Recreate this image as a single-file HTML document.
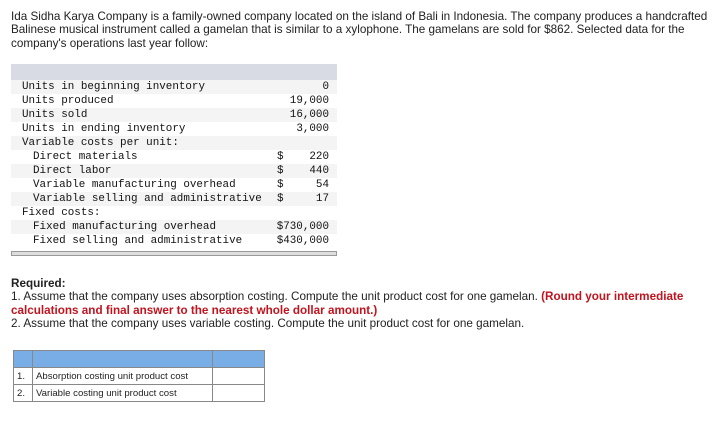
<!DOCTYPE html><html><head><style>
body{margin:0;background:#fff;font-family:"Liberation Sans",sans-serif;color:#222;}
.p{position:absolute;left:11px;font-size:11.7px;line-height:13.4px;white-space:nowrap;}
.t{position:absolute;left:11px;top:64px;width:326px;}
.h{height:16px;background:#d8dbe4;}
.r{position:relative;height:14px;font-family:"Liberation Mono",monospace;font-size:10.9px;line-height:14px;white-space:pre;color:#111;}
.r:nth-child(odd){background:#f4f4f4;}
.r span{position:absolute;}
.b{height:3px;border:1px solid #999;background:#ddd;margin-top:3px;}
table{position:absolute;left:13px;top:350px;border-collapse:collapse;font-size:9.6px;font-family:"Liberation Sans",sans-serif;}
td{border:1px solid #888;height:16px;padding:0 3px;}
</style></head><body>
<div class="p" style="top:10px">Ida Sidha Karya Company is a family-owned company located on the island of Bali in Indonesia. The company produces a handcrafted<br>Balinese musical instrument called a gamelan that is similar to a xylophone. The gamelans are sold for $862. Selected data for the<br>company's operations last year follow:</div>
<div class="t"><div class="h"></div>
<div>
<div class="r"><span style="left:11px">Units in beginning inventory</span><span style="right:8px">0</span></div>
<div class="r"><span style="left:11px">Units produced</span><span style="right:8px">19,000</span></div>
<div class="r"><span style="left:11px">Units sold</span><span style="right:8px">16,000</span></div>
<div class="r"><span style="left:11px">Units in ending inventory</span><span style="right:8px">3,000</span></div>
<div class="r"><span style="left:11px">Variable costs per unit:</span></div>
<div class="r"><span style="left:22px">Direct materials</span><span style="left:266px">$</span><span style="right:8px">220</span></div>
<div class="r"><span style="left:22px">Direct labor</span><span style="left:266px">$</span><span style="right:8px">440</span></div>
<div class="r"><span style="left:22px">Variable manufacturing overhead</span><span style="left:266px">$</span><span style="right:8px">54</span></div>
<div class="r"><span style="left:22px">Variable selling and administrative</span><span style="left:266px">$</span><span style="right:8px">17</span></div>
<div class="r"><span style="left:11px">Fixed costs:</span></div>
<div class="r"><span style="left:22px">Fixed manufacturing overhead</span><span style="right:8px">$730,000</span></div>
<div class="r"><span style="left:22px">Fixed selling and administrative</span><span style="right:8px">$430,000</span></div>
</div><div class="b"></div></div>
<div class="p" style="top:277px"><b>Required:</b><br>1. Assume that the company uses absorption costing. Compute the unit product cost for one gamelan. <b style="color:#c0141e">(Round your intermediate<br>calculations and final answer to the nearest whole dollar amount.)</b><br>2. Assume that the company uses variable costing. Compute the unit product cost for one gamelan.</div>
<table>
<tr style="background:#78ade6"><td style="width:12px"></td><td style="width:173px"></td><td style="width:45px"></td></tr>
<tr><td>1.</td><td>Absorption costing unit product cost</td><td style="background:#fff"></td></tr>
<tr><td>2.</td><td>Variable costing unit product cost</td><td></td></tr>
</table>
</body></html>
